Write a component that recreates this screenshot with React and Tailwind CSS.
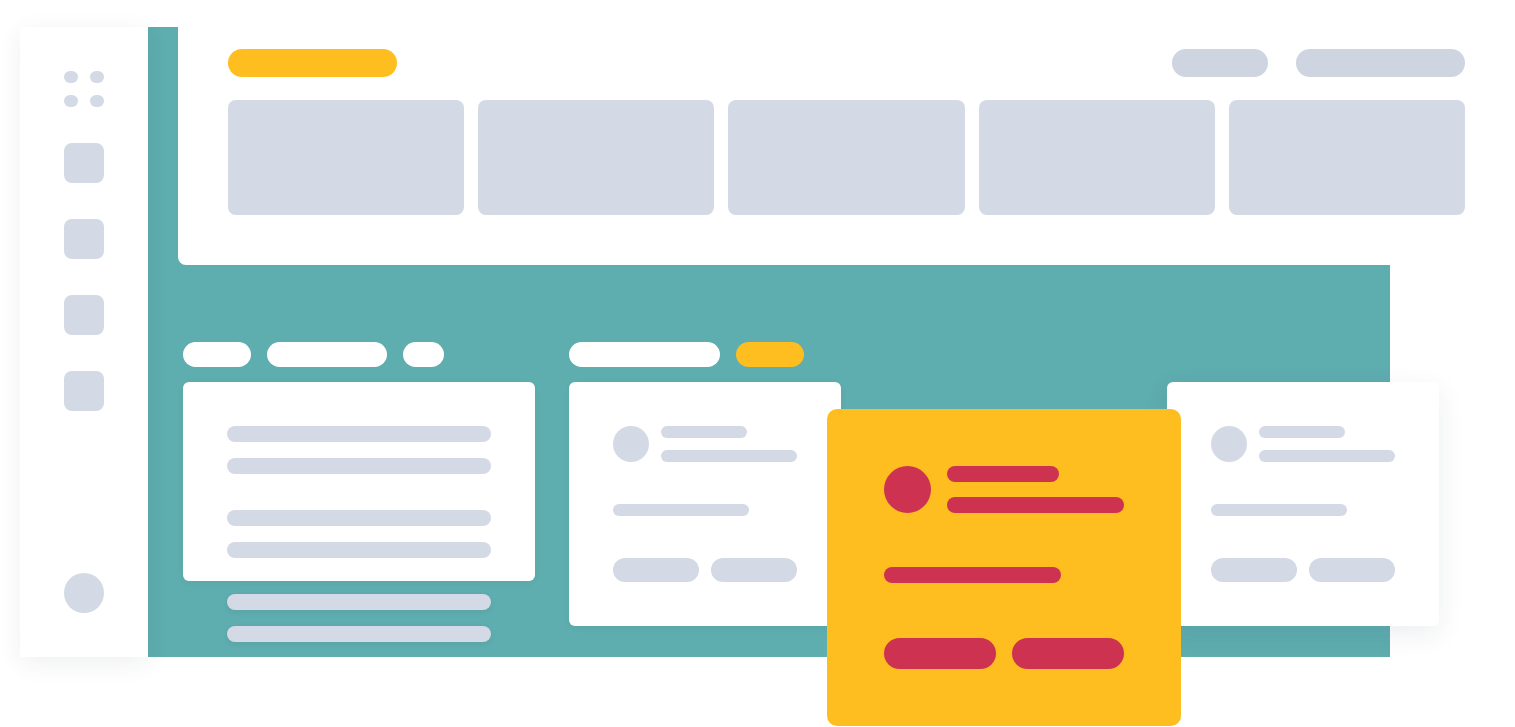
const grey = "bg-[#d3d9e5]";

function Sidebar() {
  return (
    <aside className="relative z-10 w-[128px] h-[630px] shrink-0 bg-white shadow-[0_6px_24px_rgba(30,40,60,0.07)] flex flex-col items-center pt-[44px] pb-[44px]">
      {/* app grid dots */}
      <div className="grid grid-cols-2 gap-x-[12px] gap-y-[12px] w-[40px]">
        {[0, 1, 2, 3].map((i) => (
          <span key={i} className={`w-[14px] h-[12px] rounded-full ${grey}`} />
        ))}
      </div>
      <div className="flex flex-col gap-[36px] mt-[36px]">
        {[0, 1, 2, 3].map((i) => (
          <span key={i} className={`w-[40px] h-[40px] rounded-[8px] ${grey}`} />
        ))}
      </div>
      <span className={`mt-auto w-[40px] h-[40px] rounded-full ${grey}`} />
    </aside>
  );
}

function TopPanel() {
  return (
    <div className="ml-[30px] -mt-[27px] w-[1337px] h-[265px] bg-white rounded-bl-[8px] px-[50px] pt-[49px]">
      <div className="flex items-center">
        <span className="w-[169px] h-[28px] rounded-full bg-[#ffbe1f]" />
        <span className="ml-auto w-[96px] h-[28px] rounded-full bg-[#cfd5e0]" />
        <span className="ml-[28px] w-[169px] h-[28px] rounded-full bg-[#cfd5e0]" />
      </div>
      <div className="grid grid-cols-5 gap-[14px] mt-[23px]">
        {[0, 1, 2, 3, 4].map((i) => (
          <div key={i} className={`h-[115px] rounded-[8px] ${grey}`} />
        ))}
      </div>
    </div>
  );
}

function ProfileCard({ className = "" }) {
  return (
    <div className={`w-[272px] h-[244px] bg-white rounded-[6px] p-[44px] flex flex-col ${className}`}>
      <div className="flex items-start gap-[12px]">
        <span className={`w-[36px] h-[36px] rounded-full ${grey}`} />
        <div className="flex flex-col gap-[12px]">
          <span className={`w-[86px] h-[12px] rounded-full ${grey}`} />
          <span className={`w-[136px] h-[12px] rounded-full ${grey}`} />
        </div>
      </div>
      <span className={`mt-[42px] w-[136px] h-[12px] rounded-full ${grey}`} />
      <div className="mt-[42px] flex gap-[12px]">
        <span className={`w-[86px] h-[24px] rounded-full ${grey}`} />
        <span className={`w-[86px] h-[24px] rounded-full ${grey}`} />
      </div>
    </div>
  );
}

function HighlightCard() {
  return (
    <div className="relative z-20 -ml-[14px] mt-[67px] w-[354px] h-[317px] shrink-0 bg-[#ffbe1f] rounded-[10px] p-[57px] flex flex-col">
      <div className="flex items-start gap-[16px]">
        <span className="w-[47px] h-[47px] rounded-full bg-[#cd3350]" />
        <div className="flex flex-col gap-[15px]">
          <span className="w-[112px] h-[16px] rounded-full bg-[#cd3350]" />
          <span className="w-[177px] h-[16px] rounded-full bg-[#cd3350]" />
        </div>
      </div>
      <span className="mt-[54px] w-[177px] h-[16px] rounded-full bg-[#cd3350]" />
      <div className="mt-[55px] flex gap-[16px]">
        <span className="w-[112px] h-[31px] rounded-full bg-[#cd3350]" />
        <span className="w-[112px] h-[31px] rounded-full bg-[#cd3350]" />
      </div>
    </div>
  );
}

function Board() {
  const line = `w-[264px] h-[16px] rounded-full ${grey}`;
  return (
    <div className="flex items-start pl-[35px] mt-[77px]">
      {/* list column */}
      <div className="w-[352px] shrink-0">
        <div className="flex gap-[16px]">
          <span className="w-[68px] h-[25px] rounded-full bg-white" />
          <span className="w-[120px] h-[25px] rounded-full bg-white" />
          <span className="w-[41px] h-[25px] rounded-full bg-white" />
        </div>
        <div className="mt-[15px] h-[199px] bg-white rounded-[6px] px-[44px] pt-[44px] shadow-[0_2px_8px_rgba(0,0,0,0.04)]">
          <div className="flex flex-col gap-[16px]">
            <span className={line} />
            <span className={line} />
          </div>
          <div className="flex flex-col gap-[16px] mt-[36px]">
            <span className={line} />
            <span className={line} />
          </div>
        </div>
        <div className="flex flex-col gap-[16px] mt-[13px] pl-[44px]">
          <span className={`${line} shadow-[0_2px_6px_rgba(0,0,0,0.06)]`} />
          <span className={`${line} shadow-[0_2px_6px_rgba(0,0,0,0.06)]`} />
        </div>
      </div>

      {/* cards column */}
      <div className="ml-[34px] shrink-0">
        <div className="flex gap-[16px]">
          <span className="w-[151px] h-[25px] rounded-full bg-white" />
          <span className="w-[68px] h-[25px] rounded-full bg-[#ffbe1f]" />
        </div>
        <ProfileCard className="mt-[15px] shadow-[0_2px_8px_rgba(0,0,0,0.04)]" />
      </div>

      <HighlightCard />

      <ProfileCard className="relative z-10 -ml-[14px] mt-[40px] shrink-0 shadow-[0_8px_28px_rgba(30,40,60,0.08)]" />
    </div>
  );
}

export default function App() {
  return (
    <div className="relative w-[1515px] h-[727px] bg-white overflow-hidden flex items-start pt-[27px] pl-[20px]">
      <Sidebar />
      <main className="relative w-[1242px] h-[630px] shrink-0 bg-[#5eadaf]">
        <TopPanel />
        <Board />
      </main>
    </div>
  );
}
